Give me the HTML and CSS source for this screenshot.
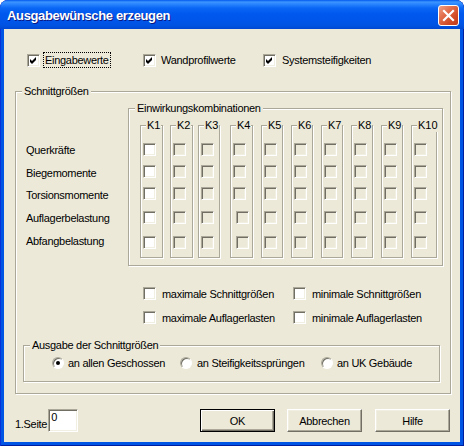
FILE: index.html
```html
<!DOCTYPE html>
<html lang="de">
<head>
<meta charset="utf-8">
<title>Ausgabewünsche erzeugen</title>
<link rel="stylesheet" href="styles.css">
</head>
<body>
<div class="window">
  <div class="titlebar">
    <span class="title">Ausgabewünsche erzeugen</span>
    <span class="close"><svg width="13" height="13" viewBox="0 0 13 13"><path d="M2 2 L11 11 M11 2 L2 11" stroke="#fff" stroke-width="2.2" stroke-linecap="square"/></svg></span>
  </div>
  <div class="client">
    <div class="toprow">
      <label class="chk w116"><span class="box"><svg class="tick" width="7" height="7" viewBox="0 0 7 7"><path d="M0 2 L2 4 L6 0 L6 3 L2 7 L0 5 Z"/></svg></span><span class="lbl focus">Eingabewerte</span></label>
      <label class="chk w120"><span class="box"><svg class="tick" width="7" height="7" viewBox="0 0 7 7"><path d="M0 2 L2 4 L6 0 L6 3 L2 7 L0 5 Z"/></svg></span><span class="lbl gap5">Wandprofilwerte</span></label>
      <label class="chk"><span class="box"><svg class="tick" width="7" height="7" viewBox="0 0 7 7"><path d="M0 2 L2 4 L6 0 L6 3 L2 7 L0 5 Z"/></svg></span><span class="lbl gap6">Systemsteifigkeiten</span></label>
    </div>

    <div class="group outer">
      <div class="legend">Schnittgrößen</div>
      <div class="matrix">
        <div class="rowlabels">
          <div class="rl">Querkräfte</div>
          <div class="rl">Biegemomente</div>
          <div class="rl">Torsionsmomente</div>
          <div class="rl">Auflagerbelastung</div>
          <div class="rl">Abfangbelastung</div>
        </div>
        <div class="group inner">
          <div class="legend">Einwirkungskombinationen</div>
          <div class="cols">
            <div class="group col"><div class="legend">K1</div><div class="cbs"><span class="box"></span><span class="box"></span><span class="box"></span><span class="box"></span><span class="box"></span></div></div>
            <div class="group col"><div class="legend">K2</div><div class="cbs"><span class="box off"></span><span class="box off"></span><span class="box off"></span><span class="box off"></span><span class="box off"></span></div></div>
            <div class="group col"><div class="legend">K3</div><div class="cbs"><span class="box off"></span><span class="box off"></span><span class="box off"></span><span class="box off"></span><span class="box off"></span></div></div>
            <div class="group col"><div class="legend">K4</div><div class="cbs shifted"><span class="box off"></span><span class="box off"></span><span class="box off"></span><span class="box off"></span><span class="box off"></span></div></div>
            <div class="group col"><div class="legend">K5</div><div class="cbs"><span class="box off"></span><span class="box off"></span><span class="box off"></span><span class="box off"></span><span class="box off"></span></div></div>
            <div class="group col"><div class="legend">K6</div><div class="cbs"><span class="box off"></span><span class="box off"></span><span class="box off"></span><span class="box off"></span><span class="box off"></span></div></div>
            <div class="group col"><div class="legend">K7</div><div class="cbs"><span class="box off"></span><span class="box off"></span><span class="box off"></span><span class="box off"></span><span class="box off"></span></div></div>
            <div class="group col"><div class="legend">K8</div><div class="cbs"><span class="box off"></span><span class="box off"></span><span class="box off"></span><span class="box off"></span><span class="box off"></span></div></div>
            <div class="group col"><div class="legend">K9</div><div class="cbs"><span class="box off"></span><span class="box off"></span><span class="box off"></span><span class="box off"></span><span class="box off"></span></div></div>
            <div class="group col wide"><div class="legend">K10</div><div class="cbs"><span class="box off"></span><span class="box off"></span><span class="box off"></span><span class="box off"></span><span class="box off"></span></div></div>
          </div>
        </div>
      </div>

      <div class="extremes">
        <label class="chk"><span class="box"></span><span class="lbl gap6">maximale Schnittgrößen</span></label>
        <label class="chk"><span class="box"></span><span class="lbl gap6">minimale Schnittgrößen</span></label>
        <label class="chk"><span class="box"></span><span class="lbl gap6">maximale Auflagerlasten</span></label>
        <label class="chk"><span class="box"></span><span class="lbl gap6">minimale Auflagerlasten</span></label>
      </div>

      <div class="group radios">
        <div class="legend">Ausgabe der Schnittgrößen</div>
        <div class="radiorow">
          <label class="rad w128"><span class="radio on"></span><span class="lbl gap4">an allen Geschossen</span></label>
          <label class="rad w141"><span class="radio"></span><span class="lbl gap5">an Steifigkeitssprüngen</span></label>
          <label class="rad"><span class="radio"></span><span class="lbl gap4">an UK Gebäude</span></label>
        </div>
      </div>
    </div>

    <div class="bottom">
      <div class="page">
        <span class="pagelbl">1.Seite</span>
        <span class="textbox">0</span>
      </div>
      <div class="buttons">
        <span class="btn default">OK</span>
        <span class="btn">Abbrechen</span>
        <span class="btn">Hilfe</span>
      </div>
    </div>
  </div>
</div>
</body>
</html>
```

FILE: styles.css
```css
* { box-sizing: border-box; }
html, body { margin: 0; padding: 0; background: #fff; }
body {
  font-family: "Liberation Sans", Arial, sans-serif;
  font-size: 11px;
  letter-spacing: -0.3px;
  color: #000;
}
.window {
  width: 464px;
  height: 446px;
  display: flex;
  flex-direction: column;
  background: #0055E5;
  border-radius: 8px 8px 0 0;
  box-shadow: inset 1px 0 #0831D9, inset -1px 0 #001EA0, inset 0 -1px #001EA0;
  overflow: hidden;
}
.titlebar {
  height: 29px;
  flex: none;
  display: flex;
  align-items: center;
  justify-content: space-between;
  padding: 0 5px 0 7px;
  background: linear-gradient(to bottom, #0058EE 0px, #3D95FF 2px, #2B86FF 4px, #0A67F5 8px, #0058EE 14px, #0055E8 22px, #0052E0 26px, #0047D2 29px);
  border-radius: 8px 8px 0 0;
}
.title {
  color: #fff;
  font-family: "Liberation Sans", Arial, sans-serif;
  font-weight: bold;
  font-size: 13px;
  text-shadow: 1px 1px 0 #0A1883;
  letter-spacing: -0.35px;
  margin-top: 1px;
}
.close {
  width: 21px;
  height: 21px;
  margin-top: 2px;
  border: 1px solid #fff;
  border-radius: 3px;
  background: linear-gradient(135deg, #F0A085 0%, #E3704E 35%, #D14C26 70%, #C0391A 100%);
  display: flex;
  align-items: center;
  justify-content: center;
}
.client {
  flex: none;
  height: 413px;
  margin: 0 4px;
  background: #ECE9D8;
  display: flex;
  flex-direction: column;
}

/* check boxes */
.box {
  width: 13px;
  height: 13px;
  flex: none;
  display: flex;
  align-items: center;
  justify-content: center;
  background: #fff;
  border: 1px solid;
  border-color: #ACA899 #fff #fff #ACA899;
  box-shadow: inset 1px 1px 0 #716F64, inset -1px -1px 0 #F1EFE2;
}
.box.off { background: #ECE9D8; }
.tick { fill: #000; margin: 1px 0 0 0; }
.chk, .rad {
  display: flex;
  align-items: center;
}
.lbl { white-space: nowrap; line-height: 14px; }
.gap4 { margin-left: 4px; }
.gap5 { margin-left: 5px; }
.gap6 { margin-left: 6px; }
.focus {
  margin-left: 3px;
  padding: 0 1px;
  border: 1px dotted #000;
}
.w116 { width: 116px; }
.w120 { width: 120px; }
.w128 { width: 128px; }
.w141 { width: 141px; }

.toprow {
  margin-top: 23px;
  height: 16px;
  padding-left: 23px;
  display: flex;
  align-items: center;
}

/* group boxes */
.group {
  border: 1px solid #ACA899;
  box-shadow: 1px 1px 0 #fff, inset 1px 1px 0 #fff;
}
.legend {
  margin: -7px 0 0 6px;
  padding: 0 2px;
  width: fit-content;
  line-height: 13px;
  height: 13px;
  background: #ECE9D8;
  white-space: nowrap;
}
.outer {
  margin: 23px 0 0 11px;
  width: 436px;
  height: 303px;
}
.matrix {
  display: flex;
  margin-top: 10px;
}
.rowlabels {
  width: 112px;
  padding: 35px 0 0 10px;
}
.rl { height: 23px; line-height: 14px; }
.rl:nth-child(2) { height: 22px; }
.inner {
  width: 315px;
  height: 158px;
}
.cols {
  display: flex;
  padding-left: 11px;
  margin-top: 10px;
}
.col {
  width: 22px;
  height: 133px;
}
.col:nth-child(1), .col:nth-child(2), .col:nth-child(4) { width: 23px; }
.col:nth-child(2) { margin-left: 7px; }
.col:nth-child(3) { margin-left: 5px; }
.col:nth-child(4) { margin-left: 10px; }
.col:nth-child(n+5) { margin-left: 8px; }
.col.wide { width: 26px; }
.col .legend { margin-left: 5px; padding: 0 1px; letter-spacing: 0; }
.cbs {
  display: flex;
  flex-direction: column;
  padding: 11px 0 0 2px;
}
.cbs .box:nth-child(2), .cbs .box:nth-child(3) { margin-top: 9px; }
.cbs .box:nth-child(4) { margin-top: 11px; }
.cbs .box:nth-child(5) { margin-top: 12px; }
.cbs.shifted .box:nth-child(n+4) { margin-left: 3px; }

.extremes {
  display: grid;
  grid-template-columns: 150px 150px;
  row-gap: 11px;
  margin-top: 21px;
  padding-left: 127px;
}
.extremes .chk { height: 13px; }

.radios {
  margin: 21px 0 0 7px;
  width: 417px;
  height: 37px;
}
.radiorow {
  display: flex;
  margin-top: 4px;
  padding-left: 28px;
  height: 13px;
  align-items: center;
}
.radio {
  width: 12px;
  height: 12px;
  flex: none;
  border-radius: 50%;
  background: #fff;
  border: 1px solid;
  border-color: #ACA899 #fff #fff #ACA899;
  box-shadow: inset 1px 1px 0 #716F64;
  display: flex;
  align-items: center;
  justify-content: center;
}
.radio.on::after {
  content: "";
  width: 4px;
  height: 4px;
  border-radius: 50%;
  background: #000;
}

/* bottom row */
.bottom {
  margin-top: 15px;
  display: flex;
  align-items: flex-end;
  padding-left: 11px;
}
.page {
  display: flex;
  align-items: flex-end;
  width: 185px;
}
.pagelbl { line-height: 14px; margin-bottom: 1px; margin-right: 1px; }
.textbox {
  width: 30px;
  height: 23px;
  background: #fff;
  border: 1px solid;
  border-color: #ACA899 #fff #fff #ACA899;
  box-shadow: inset 1px 1px 0 #716F64, inset -1px -1px 0 #F1EFE2;
  padding: 0 0 0 2px;
  line-height: 14px;
}
.buttons {
  display: flex;
  gap: 12px;
}
.btn {
  width: 75px;
  height: 23px;
  display: flex;
  align-items: center;
  justify-content: center;
  background: #ECE9D8;
  border: 1px solid;
  border-color: #fff #716F64 #716F64 #fff;
  box-shadow: inset -1px -1px 0 #ACA899, inset 1px 1px 0 #F1EFE2;
}
.btn.default {
  border: 1px solid #000;
  box-shadow: inset 1px 1px 0 #fff, inset -1px -1px 0 #716F64, inset -2px -2px 0 #ACA899;
}
.btn:last-child { margin-left: 1px; }
```
